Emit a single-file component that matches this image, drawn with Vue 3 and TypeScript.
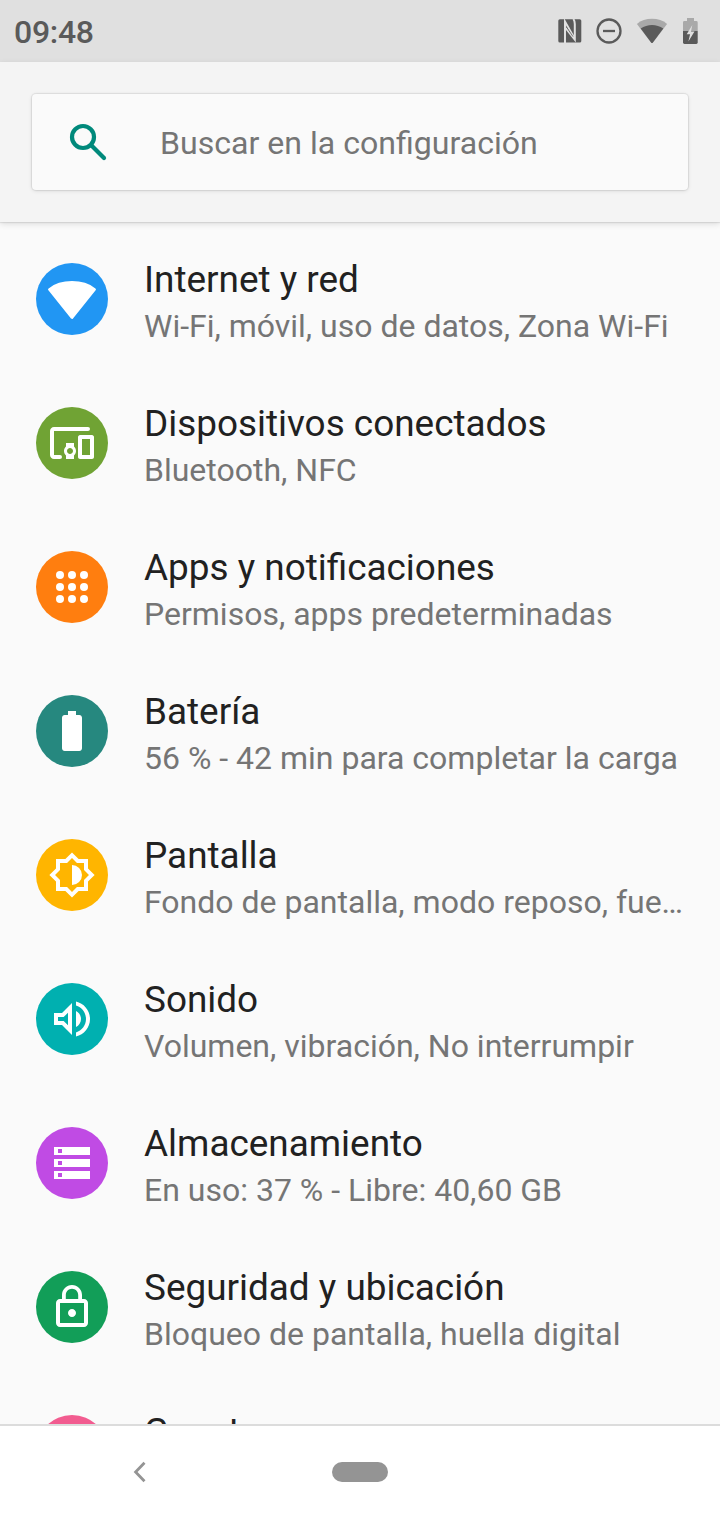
<script setup lang="ts">
interface Shape {
  d: string
  round?: boolean
}
interface Entry {
  title: string
  summary: string
  color: string
  shapes: Shape[]
}

const entries: Entry[] = [
  {
    title: 'Internet y red',
    summary: 'Wi-Fi, móvil, uso de datos, Zona Wi-Fi',
    color: '#2196f3',
    shapes: [{ d: 'M.7 7.2C4 4.6 7.8 3.7 12 3.7s8 .9 11.300 3.500L12 21.300z', round: true }],
  },
  {
    title: 'Dispositivos conectados',
    summary: 'Bluetooth, NFC',
    color: '#70a334',
    shapes: [
      { d: 'M3 6h17a1 1 0 0 0 0-2H3c-1.1 0-2 .9-2 2v12c0 1.1.9 2 2 2h3a1 1 0 0 0 0-2H3V6zm10 6H9v1.78c-.61.55-1 1.33-1 2.22s.39 1.67 1 2.22V20h4v-1.78c.61-.55 1-1.34 1-2.22s-.39-1.67-1-2.22V12zm-2 5.5c-.83 0-1.5-.67-1.5-1.5s.67-1.5 1.5-1.5 1.5.67 1.5 1.5-.67 1.5-1.5 1.5zM22 8h-6c-.5 0-1 .5-1 1v10c0 .5.5 1 1 1h6c.5 0 1-.5 1-1V9c0-.5-.5-1-1-1zm-1 10h-4v-8h4v8z' },
    ],
  },
  {
    title: 'Apps y notificaciones',
    summary: 'Permisos, apps predeterminadas',
    color: '#ff7e0f',
    shapes: [6, 12, 18].flatMap((y) =>
      [6, 12, 18].map((x) => ({ d: `M${x - 2} ${y}a2 2 0 1 0 4 0a2 2 0 1 0 -4 0z` })),
    ),
  },
  {
    title: 'Batería',
    summary: '56 % - 42 min para completar la carga',
    color: '#26887f',
    shapes: [
      { d: 'M15.67 4H14V2h-4v2H8.33C7.6 4 7 4.6 7 5.33v15.33C7 21.4 7.6 22 8.33 22h7.33c.74 0 1.34-.6 1.34-1.33V5.33C17 4.6 16.4 4 15.67 4z' },
    ],
  },
  {
    title: 'Pantalla',
    summary: 'Fondo de pantalla, modo reposo, fue…',
    color: '#ffb500',
    shapes: [
      { d: 'M20 8.69V4h-4.69L12 .69 8.69 4H4v4.69L.69 12 4 15.31V20h4.69L12 23.31 15.31 20H20v-4.69L23.31 12 20 8.69zM18 14.48V18h-3.52L12 20.48 9.52 18H6v-3.52L3.52 12 6 9.52V6h3.52L12 3.52 14.48 6H18v3.52L20.48 12 18 14.48zM12 7v10a5 5 0 0 0 0-10z' },
    ],
  },
  {
    title: 'Sonido',
    summary: 'Volumen, vibración, No interrumpir',
    color: '#00b0b0',
    shapes: [
      { d: 'M3 9v6h4l5 5V4L7 9H3zm7-.17v6.34L7.83 13H5v-2h2.83L10 8.83zM16.5 12c0-1.77-1.02-3.29-2.5-4.03v8.06c1.48-.74 2.5-2.26 2.5-4.03zM14 3.23v2.06c2.89.86 5 3.54 5 6.71s-2.11 5.85-5 6.71v2.06c4.01-.91 7-4.49 7-8.77s-2.99-7.86-7-8.77z' },
    ],
  },
  {
    title: 'Almacenamiento',
    summary: 'En uso: 37 % - Libre: 40,60 GB',
    color: '#c04be4',
    shapes: [4, 10, 16].map((y) => ({ d: `M3 ${y}h18v4H3zM5 ${y + 1}v2h2v-2z` })),
  },
  {
    title: 'Seguridad y ubicación',
    summary: 'Bloqueo de pantalla, huella digital',
    color: '#129e58',
    shapes: [
      { d: 'M12 17c1.1 0 2-.9 2-2s-.9-2-2-2-2 .9-2 2 .9 2 2 2zm6-9h-1V6c0-2.76-2.24-5-5-5S7 3.24 7 6v2H6c-1.1 0-2 .9-2 2v10c0 1.1.9 2 2 2h12c1.1 0 2-.9 2-2V10c0-1.1-.9-2-2-2zM8.9 6c0-1.71 1.39-3.1 3.1-3.1s3.1 1.39 3.1 3.1v2H8.9V6zM18 20H6V10h12v10z' },
    ],
  },
  { title: 'Cuentas', summary: '', color: '#f25c90', shapes: [] },
]
</script>

<template>
  <div class="screen">
    <header class="status">
      <span class="clock">09:48</span>
      <div class="tray">
        <svg class="nfc" width="24" height="26" viewBox="0 0 24 26">
          <rect x="0.3" y="1.2" width="23" height="23.4" rx="1.6" fill="#5a5a5a" />
          <path d="M7 25V3.600L16.500 20.500" fill="none" stroke="#e0e0e0" stroke-width="2" />
          <path d="M7.600 9.800L16.800 21.500V6Q16.800 3 15.400 1" fill="none" stroke="#e0e0e0" stroke-width="2" />
          <path d="M8.500 9L15 18.600" fill="none" stroke="#5a5a5a" stroke-width="0.800" />
        </svg>
        <svg class="dnd" width="26" height="26" viewBox="0 0 26 26" fill="none" stroke="#5a5a5a">
          <circle cx="13" cy="13" r="11.5" stroke-width="2.3" />
          <path d="M7 13h12" stroke-width="2.3" />
        </svg>
        <svg class="signal" width="32" height="26" viewBox="0 0 32 26">
          <path d="M.9 5.9C5 2.200 10.200.700 16 .700s11 1.500 15.100 5.200L16.900 24.500q-.9 1-1.800 0z" fill="#a9a9a9" />
          <path d="M4.700 10.600C8 8 12 6.900 16 6.900s8 1.100 11.300 3.700L16.900 24.500q-.9 1-1.800 0z" fill="#5a5a5a" />
        </svg>
        <svg class="charge" width="15" height="26" viewBox="0 0 15 26">
          <path d="M4 0h7v3H13.300q1.400 0 1.400 1.400V13H0V4.400Q0 3 1.400 3H4z" fill="#a9a9a9" />
          <path d="M0 13h14.700v11.600q0 1.400-1.400 1.400H1.400Q0 26 0 24.600z" fill="#5a5a5a" />
          <path d="M9.300 7L3.700 16.200h3.400L5.400 23.400 11.500 13.400H8z" fill="#e0e0e0" />
        </svg>
      </div>
    </header>

    <section class="top">
      <div class="search">
        <svg width="40" height="40" viewBox="0 0 40 40" fill="none" stroke="#00897b" stroke-width="4.200">
          <circle cx="15" cy="15" r="11" />
          <path d="M24 24L36 36" stroke-linecap="round" />
        </svg>
        <span class="hint">Buscar en la configuración</span>
      </div>
    </section>

    <main class="list">
      <div v-for="e in entries" :key="e.title" class="row">
        <div class="badge" :style="{ background: e.color }">
          <svg width="48" height="48" viewBox="0 0 24 24">
            <path v-for="(s, i) in e.shapes" :key="i" :d="s.d" :class="{ round: s.round }" fill-rule="evenodd" />
          </svg>
        </div>
        <div class="text">
          <div class="title">{{ e.title }}</div>
          <div class="summary">{{ e.summary }}</div>
        </div>
      </div>
    </main>

    <nav class="nav">
      <svg class="back" width="14" height="22" viewBox="0 0 14 22">
        <path d="M11.500 1.800L2.600 11 11.500 20.200" fill="none" stroke="#949494" stroke-width="2.800" />
      </svg>
      <div class="home"></div>
    </nav>
  </div>
</template>

<style>
body {
  margin: 0;
}
</style>

<style scoped>
.screen {
  width: 720px;
  height: 1520px;
  display: flex;
  flex-direction: column;
  overflow: hidden;
  background: #fafafa;
  font-family: Roboto, sans-serif;
}
.status {
  flex: none;
  height: 62px;
  box-sizing: border-box;
  padding: 0 22px 0 14px;
  display: flex;
  align-items: center;
  justify-content: space-between;
  background: #e0e0e0;
}
.clock {
  padding-top: 2px;
  font-size: 32px;
  font-weight: 500;
  line-height: 60px;
  letter-spacing: -0.3px;
  color: #5a5a5a;
}
.tray {
  display: flex;
  align-items: center;
}
.tray svg {
  display: block;
}
.dnd {
  margin-left: 14px;
}
.signal {
  margin-left: 14px;
}
.charge {
  margin-left: 15px;
}
.top {
  flex: none;
  height: 160px;
  box-sizing: border-box;
  padding: 32px;
  background: #f4f4f4;
  box-shadow: 0 1px 1px rgba(0, 0, 0, 0.08), 0 2px 6px rgba(0, 0, 0, 0.12);
  z-index: 1;
}
.search {
  height: 96px;
  box-sizing: border-box;
  padding-left: 36px;
  display: flex;
  align-items: center;
  border-radius: 4px;
  background: #fafafa;
  box-shadow: 0 0 1px 1px rgba(0, 0, 0, 0.08), 0 1px 4px rgba(0, 0, 0, 0.1);
}
.hint {
  margin-left: 52px;
  padding-top: 2px;
  font-size: 32.1px;
  line-height: 38px;
  color: #757575;
}
.list {
  flex: 1;
  min-height: 0;
  padding-top: 5px;
  overflow: hidden;
}
.row {
  height: 144px;
  display: flex;
  align-items: center;
  padding: 0 36px;
}
.badge {
  flex: none;
  width: 72px;
  height: 72px;
  border-radius: 50%;
  display: flex;
  align-items: center;
  justify-content: center;
}
.badge path {
  fill: #fff;
}
.badge .round {
  stroke: #fff;
  stroke-width: 1.3;
  stroke-linejoin: round;
}
.text {
  flex: 1;
  min-width: 0;
  height: 88px;
  margin: 6px 0 0 36px;
}
.title {
  font-size: 36.9px;
  line-height: 44px;
  color: #212121;
}
.summary {
  margin-top: 5px;
  font-size: 32px;
  line-height: 38px;
  color: #757575;
  white-space: nowrap;
}
.nav {
  flex: none;
  height: 96px;
  box-sizing: border-box;
  border-top: 2px solid #dcdcdc;
  padding: 0 0 2px 133px;
  display: flex;
  align-items: center;
  background: #fff;
}
.home {
  width: 56px;
  height: 20px;
  margin-left: 185px;
  border-radius: 10px;
  background: #949494;
}
</style>
